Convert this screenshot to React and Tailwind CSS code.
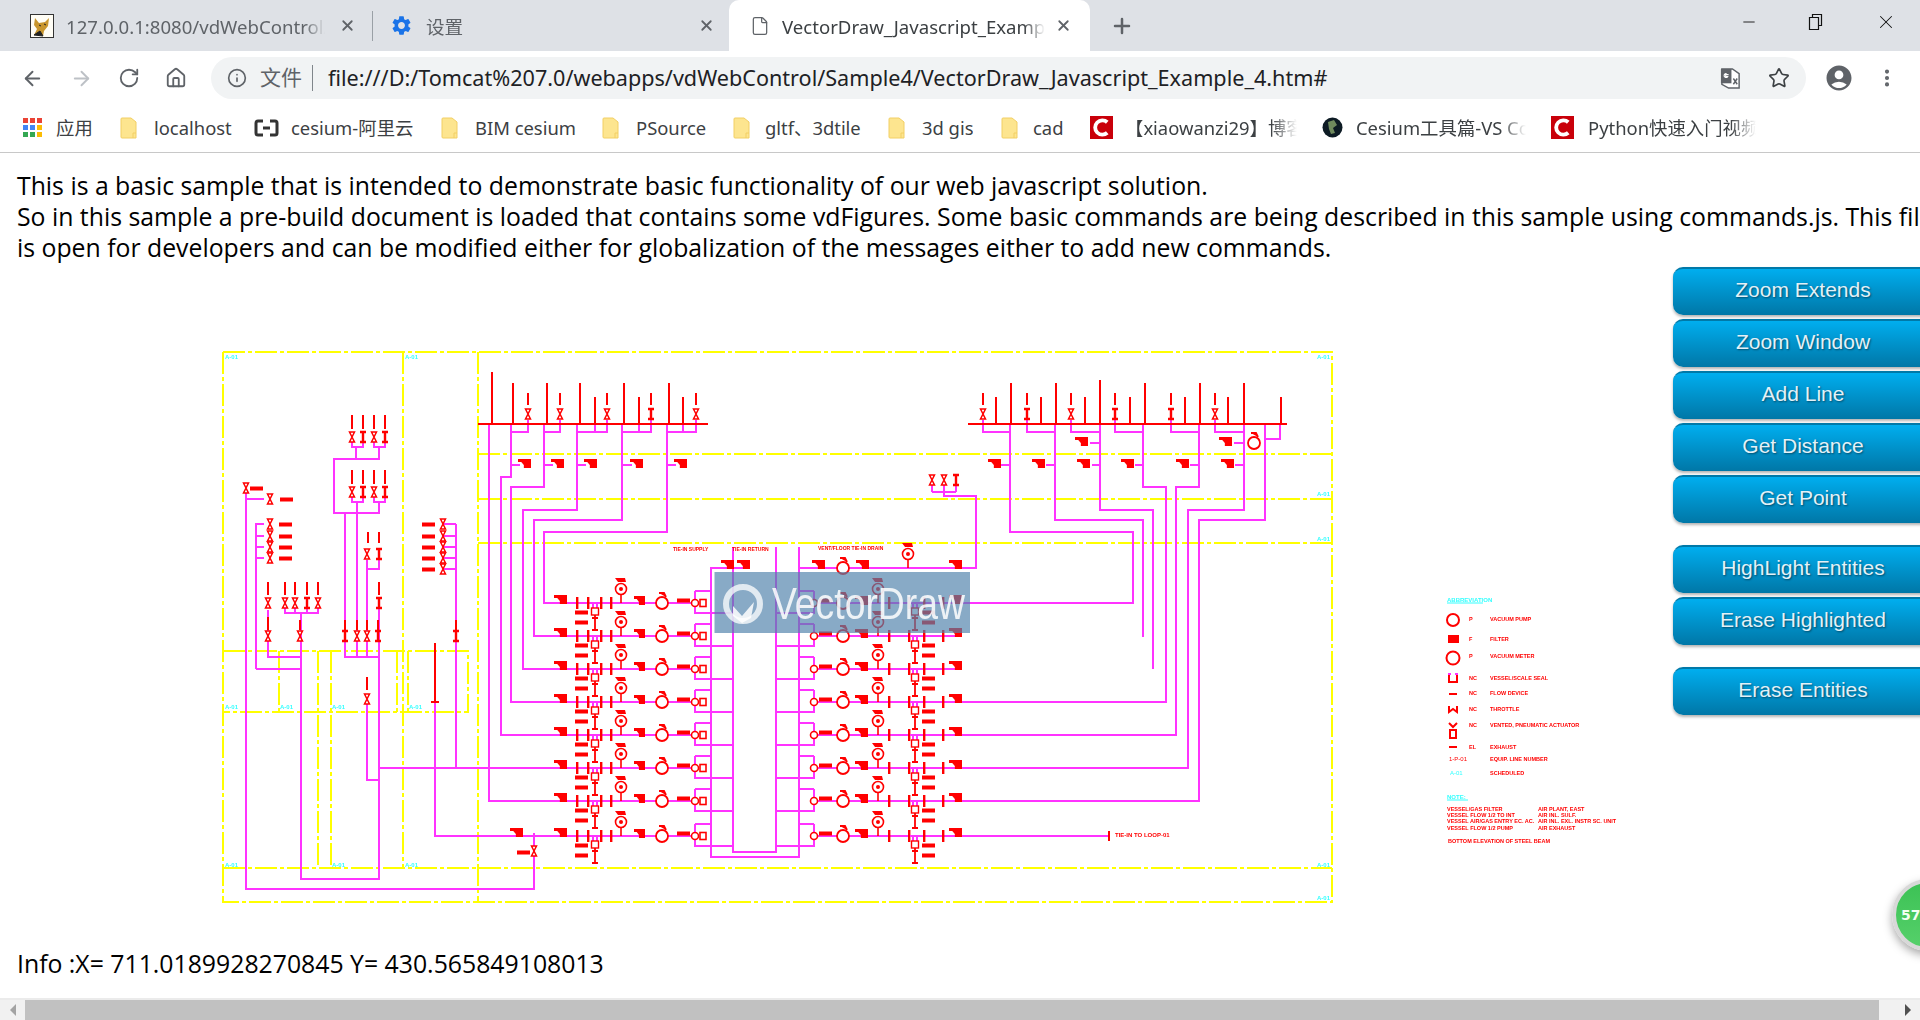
import React from 'react'
import { ArrowLeft, ArrowRight, RotateCw, Home, Info, Star, MoreVertical, Plus, X, Minus, File } from 'lucide-react'
import { MdSettings, MdAccountCircle } from 'react-icons/md'

const RED = '#ff0000'
const MAG = '#ff33ff'
const YEL = '#ffff00'
const CYAN = '#33ffff'

const leftRows = [603, 636, 669, 702, 735, 768, 801, 836]
const rightRows = [568, 603, 636, 669, 702, 735, 768, 801, 836]

// Magenta pipe runs, page coordinates
const pipes = [
  '489,424 489,801 695,801', '511,424 511,477 501,477 501,735 695,735', '544,424 544,487 511,487 511,702 695,702',
  '577,424 577,510 523,510 523,669 695,669', '622,424 622,520 534,520 534,636 695,636', '667,424 667,532 544,532 544,603 695,603',
  '511,432 528,432 528,420', '544,432 560,432 560,420', '577,432 607,432 607,420', '595,432 595,424', '622,432 651,432 651,420',
  '639,432 639,424', '667,432 696,432 696,420', '683,432 683,424', '511,465 520,465', '544,465 553,465', '577,465 586,465', '622,465 632,465', '667,465 676,465',
  '1010,424 1010,532 1133,532 1133,603 814,603', '1055,424 1055,520 1143,520 1143,637', '1100,424 1100,510 1153,510 1153,669',
  '1143,424 1143,487 1166,487 1166,702 956,702', '1199,424 1199,487 1176,487 1176,735 956,735', '1244,424 1244,510 1188,510 1188,768 956,768',
  '1265,424 1265,520 1199,520 1199,801 956,801', '1280,424 1280,439 1265,439', '983,420 983,432 1010,432', '1027,420 1027,432 1055,432',
  '1071,420 1071,432 1100,432', '1115,420 1115,432 1143,432', '1171,420 1171,432 1199,432', '1215,420 1215,432 1244,432',
  '1001,465 1010,465', '1046,465 1055,465', '1092,465 1100,465', '1135,465 1143,465', '1190,465 1199,465', '1235,465 1244,465', '1090,443 1100,443', '1234,443 1244,443',
  '246,493 246,889 534,889 534,833', '246,499 264,499', '256,669 256,524 264,524', '256,536 264,536', '256,547 264,547', '256,558 264,558', '256,669 301,669',
  '301,620 301,879 379,879 379,603', '268,610 268,657 301,657', '285,606 285,613 318,613 318,606', '295,606 295,613', '307,606 307,613', '301,613 301,620',
  '352,442 352,447 363,447 363,442', '374,442 374,447 385,447 385,442', '379,447 379,459 334,459 334,513 345,513 345,657 379,657', '356,447 356,459',
  '352,497 352,502 363,502 363,497', '374,497 374,502 385,502 385,497', '357,502 357,657', '379,502 379,513 345,513', '367,560 367,657', '367,569 379,569 379,558',
  '456,524 456,768', '444,524 456,524', '444,536 456,536', '444,547 456,547', '444,558 456,558', '444,569 456,569',
  '379,768 695,768', '367,700 367,780 379,780', '435,702 435,836 695,836',
  '711,568 711,857 799,857 799,547', '733,547 733,852 776,852 776,547', '710,568 750,568', '800,568 976,568 976,496 944,496 944,492', '932,492 956,492',
  '932,484 932,492', '944,484 944,492', '956,484 956,492', '956,702 956,702', '814,836 1109,836',
]

function Valve({ x, y, bar }) {
  return bar ? (
    <path d={`M${x - 3} ${y - 5}h6M${x - 3} ${y + 5}h6M${x} ${y - 5}v10`} stroke={RED} strokeWidth="2.4" fill="none" />
  ) : (
    <path d={`M${x - 2.5} ${y - 5}h5l-5 10h5z`} stroke={RED} strokeWidth="1.5" fill="#fff" />
  )
}

function Block({ x, y, w = 13 }) {
  return <path d={`M${x} ${y - 4}h${w}v9h-${w * 0.55}v-3l-${w * 0.2} -3h-${w * 0.25}z`} fill={RED} />
}

function Bar({ x, y, w = 13 }) {
  return <rect x={x} y={y - 1.5} width={w} height="4" fill={RED} />
}

function Tick({ x, y }) {
  return <rect x={x - 1} y={y - 6} width="2.4" height="12" fill={RED} />
}

function Pump({ x, y }) {
  return (
    <g stroke={RED} strokeWidth="1.8" fill="#fff">
      <circle cx={x} cy={y} r="6" />
      <path d={`M${x - 3} ${y - 10}h5l2 4`} fill={RED} />
    </g>
  )
}

function Gauge({ x, y }) {
  return (
    <g>
      <path d={`M${x} ${y - 8}v8`} stroke={RED} strokeWidth="1.6" />
      <circle cx={x} cy={y - 14} r="5.5" stroke={RED} strokeWidth="1.6" fill="#fff" />
      <circle cx={x} cy={y - 14} r="2" fill={RED} />
      <path d={`M${x - 6} ${y - 25}h10l1 4h-8z`} fill={RED} />
    </g>
  )
}

function Branch({ x, y }) {
  return (
    <g>
      <path d={`M${x - 5} ${y}h3v5M${x + 5} ${y}h-3v5`} stroke={MAG} strokeWidth="2" fill="none" />
      <rect x={x - 3.5} y={y + 5} width="7" height="7" fill="#fff" stroke={RED} strokeWidth="1.4" />
      <path d={`M${x} ${y + 12}v15M${x - 3} ${y + 15}h6M${x - 3} ${y + 27}h6`} stroke={RED} strokeWidth="1.8" fill="none" />
    </g>
  )
}

function LeftRow({ y }) {
  return (
    <g>
      <Block x={554} y={y - 4} />
      <Tick x={577} y={y} /><Tick x={588} y={y} /><Tick x={601} y={y} /><Tick x={611} y={y} />
      <Branch x={595} y={y} />
      <Bar x={575} y={y + 9} /><Bar x={575} y={y + 19} />
      <Gauge x={621} y={y} />
      <Block x={634} y={y - 3} w={11} />
      <Pump x={662} y={y} />
      <Bar x={677} y={y - 3} />
      <circle cx={695} cy={y} r="3.5" fill="#fff" stroke={RED} strokeWidth="1.6" />
      <rect x={700} y={y - 3.5} width="6" height="7" fill="#fff" stroke={RED} strokeWidth="1.6" />
    </g>
  )
}

function RightRow({ y }) {
  return (
    <g>
      <circle cx={814} cy={y} r="3.5" fill="#fff" stroke={RED} strokeWidth="1.6" />
      <Bar x={819} y={y - 3} />
      <Pump x={843} y={y} />
      <Block x={855} y={y - 3} />
      <Gauge x={878} y={y} />
      <Tick x={889} y={y} /><Tick x={909} y={y} /><Tick x={924} y={y} /><Tick x={943} y={y} />
      <Branch x={915} y={y} />
      <Bar x={922} y={y + 9} /><Bar x={922} y={y + 19} />
      <Block x={949} y={y - 4} />
    </g>
  )
}

const yellowFrame = [
  '223,352 1332,352 1332,902 223,902 223,352', '478,352 478,902', '403,352 403,868', '478,454 1332,454', '478,499 1332,499', '478,543 1332,543', '223,868 1332,868',
  '223,651 468,651 468,712 223,712', '279,651 279,712', '318,651 318,868', '331,651 331,868', '397,651 397,712', '408,651 408,712',
]

const redLines = [
  '478,424 708,424', '968,424 1287,424', '492,372 492,424', '513,383 513,424', '547,383 547,424', '580,383 580,424', '624,383 624,424', '669,383 669,424',
  '595,397 595,424', '639,397 639,424', '683,397 683,424', '528,393 528,405', '560,393 560,405', '607,393 607,405', '651,393 651,405', '696,393 696,405',
  '1011,383 1011,424', '1056,383 1056,424', '1100,380 1100,424', '1145,383 1145,424', '1200,383 1200,424', '1244,383 1244,424',
  '996,397 996,424', '1041,397 1041,424', '1085,397 1085,424', '1130,397 1130,424', '1185,397 1185,424', '1228,397 1228,424', '1281,397 1281,424',
  '983,393 983,405', '1027,393 1027,405', '1071,393 1071,405', '1115,393 1115,405', '1171,393 1171,405', '1215,393 1215,405',
  '352,415 352,429', '363,415 363,429', '374,415 374,429', '385,415 385,429', '352,470 352,484', '363,470 363,484', '374,470 374,484', '385,470 385,484',
  '368,532 368,543', '379,532 379,543', '268,582 268,595', '285,582 285,595', '295,582 295,595', '307,582 307,595', '318,582 318,595', '379,582 379,595',
  '268,617 268,630', '300,620 300,630', '345,620 345,630', '357,620 357,630', '367,620 367,630', '378,620 378,630', '456,620 456,630',
  '435,643 435,702', '367,677 367,690', '431,702 439,702', '1109,831 1109,841',
]

const topValves = [
  [528, 414], [560, 414], [607, 414], [651, 414, true], [696, 414], [983, 414], [1027, 414, true], [1071, 414], [1115, 414, true], [1171, 414, true], [1215, 414],
  [352, 437], [363, 437, true], [374, 437], [385, 437, true], [352, 492], [363, 492, true], [374, 492], [385, 492, true], [367, 554], [379, 554, true],
  [268, 603], [285, 603], [295, 603], [307, 603, true], [318, 603], [379, 603, true], [268, 636], [300, 636], [345, 636, true], [357, 636], [367, 636], [378, 636, true], [456, 636, true],
  [367, 699], [534, 851], [246, 488], [932, 480], [944, 480], [956, 480, true],
]

const labels = [
  [225, 359], [405, 359], [1317, 359], [1317, 496], [1317, 541], [225, 709], [280, 709], [332, 709], [409, 709], [225, 867], [332, 867], [405, 867], [1317, 867], [1317, 900],
]

const legendRows = [
  ['P', 'VACUUM PUMP', 619], ['F', 'FILTER', 639], ['P', 'VACUUM METER', 656], ['NC', 'VESSEL/SCALE SEAL', 678], ['NC', 'FLOW DEVICE', 693],
  ['NC', 'THROTTLE', 709], ['NC', 'VENTED, PNEUMATIC ACTUATOR', 725], ['EL', 'EXHAUST', 747], ['', 'EQUIP. LINE NUMBER', 759], ['', 'SCHEDULED', 773],
]

const legendNotes = [
  ['VESSEL/GAS FILTER', 'AIR PLANT, EAST', 811], ['VESSEL FLOW 1/2 TO INT', 'AIR INL. SULF.', 817], ['VESSEL AIR/GAS ENTRY EC. AC.', 'AIR INL. EXL. INSTR SC. UNIT', 823], ['VESSEL FLOW 1/2 PUMP', 'AIR EXHAUST', 830],
]

function CadDrawing() {
  return (
    <svg viewBox="0 263 1673 677" className="block w-[1673px] h-[677px] blur-[0.6px]">
      <g fill="none" stroke={YEL} strokeWidth="2" strokeDasharray="22 3 4 3">
        {yellowFrame.map((p) => <polyline key={p} points={p} />)}
      </g>
      <g fill="none" stroke={MAG} strokeWidth="2">
        {pipes.map((p) => <polyline key={p} points={p} />)}
        {leftRows.map((y) => <path key={y} d={`M695 ${y - 12}v22h38M695 ${y - 12}h16`} />)}
        {rightRows.slice(1).map((y) => <path key={y} d={`M814 ${y - 12}v22h-38M814 ${y - 12}h-14M814 ${y}h142`} />)}
      </g>
      <g fill="none" stroke={RED} strokeWidth="2">
        {redLines.map((p) => <polyline key={p} points={p} />)}
      </g>
      {topValves.map(([x, y, bar]) => <Valve key={`${x}-${y}`} x={x} y={y} bar={bar} />)}
      {[518, 551, 584, 630, 674, 988, 1032, 1077, 1121, 1176, 1221].map((x) => <Block key={x} x={x} y={463} />)}
      <Block x={1075} y={441} /><Block x={1219} y={441} />
      <Pump x={1254} y={443} />
      {[[250, 488], [280, 499], [279, 524], [279, 536], [279, 547], [279, 558], [422, 524], [422, 536], [422, 547], [422, 558], [422, 569], [517, 852]].map(([x, y]) => <Bar key={`${x}-${y}`} x={x} y={y} />)}
      <Block x={510} y={832} />
      {[499, 524, 536, 547, 558].map((y) => <Valve key={y} x={270} y={y} />)}
      {[524, 536, 547, 558, 569].map((y) => <Valve key={y} x={443} y={y} />)}
      <Block x={721} y={564} /><Block x={737} y={564} />
      {leftRows.map((y) => <LeftRow key={y} y={y} />)}
      <Block x={812} y={564} /><Pump x={843} y={568} /><Block x={856} y={564} /><Gauge x={908} y={568} /><Block x={949} y={564} />
      {rightRows.slice(1).map((y) => <RightRow key={y} y={y} />)}

      <g fontFamily="Liberation Sans, sans-serif" fontWeight="700" fontSize="5" fill={RED}>
        <text x="673" y="551">TIE-IN SUPPLY</text>
        <text x="732" y="551">TIE-IN RETURN</text>
        <text x="818" y="550">VENT/FLOOR TIE-IN DRAIN</text>
        <text x="1115" y="837" fontSize="6">TIE-IN TO LOOP-01</text>
      </g>
      <g fontFamily="Liberation Sans, sans-serif" fontWeight="700" fill={CYAN}>
        {labels.map(([x, y]) => <text key={`${x}-${y}`} x={x} y={y} fontSize="6">A-01</text>)}
      </g>

      <rect x="714.5" y="572" width="255.5" height="61" fill="#4f82ab" fillOpacity="0.68" />
      <circle cx="743" cy="604" r="17" fill="none" stroke="#ffffff" strokeOpacity="0.75" strokeWidth="6" />
      <path d="M733 606l9 10 12-14-3 16-9 5-9-7z" fill="#ffffff" fillOpacity="0.85" />
      <text x="772" y="619" fontFamily="Liberation Sans, sans-serif" fontSize="44" fill="#ffffff" fillOpacity="0.85" textLength="193" lengthAdjust="spacingAndGlyphs">VectorDraw</text>

      <g fontFamily="Liberation Sans, sans-serif" fontWeight="700" fontSize="5.5" fill={RED}>
        <text x="1447" y="602" fill={CYAN} fontSize="6">ABBREVIATION</text>
        <path d="M1447 603h36M1447 800h21" stroke={CYAN} fill="none" />
        {legendRows.map(([code, name, y]) => (
          <g key={y}>
            <text x="1469" y={y + 2}>{code}</text>
            <text x="1490" y={y + 2}>{name}</text>
          </g>
        ))}
        <text x="1447" y="799" fill={CYAN} fontSize="6">NOTE:</text>
        {legendNotes.map(([a, b, y]) => (
          <g key={y}>
            <text x="1447" y={y}>{a}</text>
            <text x="1538" y={y}>{b}</text>
          </g>
        ))}
        <text x="1448" y="843">BOTTOM ELEVATION OF STEEL BEAM</text>
      </g>
      <g stroke={RED} strokeWidth="2" fill="none">
        <circle cx="1453" cy="620" r="6" />
        <rect x="1449" y="636" width="9" height="6" fill={RED} />
        <circle cx="1453" cy="658" r="6.5" />
        <path d="M1449 675v7h8v-7M1449 694h8M1449 706v6l4-3 4 3v-6M1449 723l4 4 4-4M1450 730h6v8h-6zM1449 747h8" />
        <path d="M1448 674h3M1458 674h-3" stroke={MAG} />
        <text x="1450" y="775" fontSize="6" stroke="none" fill={CYAN} fontFamily="Liberation Sans, sans-serif">A-01</text>
        <text x="1449" y="761" fontSize="6" stroke="none" fill={RED} fontFamily="Liberation Sans, sans-serif">1-P-01</text>
      </g>
    </svg>
  )
}

function Tab({ icon, title, width, active, fadeWidth }) {
  return (
    <div className={`flex items-center h-full ${width} ${active ? 'bg-white rounded-t-[10px] text-[#3c4043]' : 'text-[#5f6368]'}`}>
      {icon}
      <span className={`${fadeWidth} overflow-hidden whitespace-nowrap text-[18.6px] pt-[2px] [mask-image:linear-gradient(to_right,black_92%,transparent)]`}>{title}</span>
      <X className="w-[17px] h-[17px] text-[#5f6368] shrink-0" strokeWidth={2.5} />
    </div>
  )
}

function TomcatIcon() {
  return (
    <svg viewBox="0 0 24 24" className="w-6 h-6 shrink-0 mr-3 ml-[30px]">
      <rect x="0.5" y="0.5" width="23" height="23" fill="#fffdf5" stroke="#333" />
      <path d="M5 4l4 5 6-1 4-4-1 8-4 5-1 5-3-4-6 3 3-6-3-4z" fill="#c9962e" />
      <path d="M4 21l6-4 3 5zM9 11l2 1M14 10l2 1" stroke="#222" fill="#222" />
    </svg>
  )
}

function CsdnIcon() {
  return (
    <svg viewBox="0 0 24 24" className="w-[23px] h-[23px] shrink-0">
      <rect width="24" height="24" fill="#c9000a" />
      <path d="M18 6.5a7.5 7.5 0 1 0 0 11" fill="none" stroke="#fff" strokeWidth="4" />
    </svg>
  )
}

function Folder() {
  return (
    <svg viewBox="0 0 17 22" className="w-[17px] h-[22px] shrink-0">
      <path d="M1 2a1 1 0 0 1 1-1h9l5 4v16H2a1 1 0 0 1-1-1z" fill="#fde58f" stroke="#f2cf64" />
      <path d="M13 21v-5h3" fill="none" stroke="#f2cf64" />
    </svg>
  )
}

const bookmarks = [
  { w: 'w-[97px]', gap: 'gap-[13px]', text: '应用', icon: (
    <svg viewBox="0 0 20 20" className="w-5 h-5 shrink-0">
      {[['#ea4335', '#ea4335', '#ea4335'], ['#4285f4', '#4285f4', '#fbbc05'], ['#34a853', '#34a853', '#fbbc05']].map((row, r) =>
        row.map((c, i) => <rect key={`${r}${i}`} x={i * 7} y={r * 7} width="5" height="5" fill={c} />),
      )}
    </svg>
  ) },
  { w: 'w-[134px]', gap: 'gap-[17px]', text: 'localhost', icon: <Folder /> },
  { w: 'w-[187px]', gap: 'gap-[12px]', text: 'cesium-阿里云', icon: (
    <svg viewBox="0 0 25 20" className="w-[25px] h-5 shrink-0">
      <path d="M9 3H4a2 2 0 0 0-2 2v10a2 2 0 0 0 2 2h5M16 3h5a2 2 0 0 1 2 2v10a2 2 0 0 1-2 2h-5M9 10h7" fill="none" stroke="#333" strokeWidth="3" />
    </svg>
  ) },
  { w: 'w-[161px]', gap: 'gap-[17px]', text: 'BIM cesium', icon: <Folder /> },
  { w: 'w-[131px]', gap: 'gap-[17px]', text: 'PSource', icon: <Folder /> },
  { w: 'w-[155px]', gap: 'gap-[15px]', text: 'gltf、3dtile', icon: <Folder /> },
  { w: 'w-[113px]', gap: 'gap-[17px]', text: '3d gis', icon: <Folder /> },
  { w: 'w-[89px]', gap: 'gap-[15px]', text: 'cad', icon: <Folder /> },
  { w: 'w-[232px]', gap: 'gap-[12px]', text: '【xiaowanzi29】博客', clip: 'w-[172px]', icon: <CsdnIcon /> },
  { w: 'w-[229px]', gap: 'gap-[13px]', text: 'Cesium工具篇-VS Code', clip: 'w-[170px]', icon: (
    <svg viewBox="0 0 21 21" className="w-[21px] h-[21px] shrink-0">
      <circle cx="10.5" cy="10.5" r="10" fill="#0d1b24" />
      <path d="M6 5l6-2 3 5-4 3 2 5-4 1-2-5z" fill="#6f8a5d" />
    </svg>
  ) },
  { w: 'w-[220px]', gap: 'gap-[14px]', text: 'Python快速入门视频', clip: 'w-[168px]', icon: <CsdnIcon /> },
]

const buttonGroups = [
  { cls: '', items: ['Zoom Extends', 'Zoom Window', 'Add Line', 'Get Distance', 'Get Point'] },
  { cls: 'mt-[22px]', items: ['HighLight Entities', 'Erase Highlighted'] },
  { cls: 'mt-[22px]', items: ['Erase Entities'] },
]

export default function App() {
  return (
    <div className="relative flex flex-col w-[1920px] h-[1020px] overflow-hidden bg-white text-black font-['Noto_Sans','Noto_Sans_CJK_SC',sans-serif]">
      {/* tab strip */}
      <div className="flex items-center h-[51px] shrink-0 bg-[#dee1e6]">
        <Tab icon={<TomcatIcon />} title="127.0.0.1:8080/vdWebControl/" width="w-[372px]" fadeWidth="w-[259px] mr-[14px]" />
        <div className="w-px h-[30px] bg-[#9aa0a6] shrink-0" />
        <Tab
          icon={<MdSettings className="w-[23px] h-[23px] text-[#1a73e8] ml-[17px] mr-[13px] shrink-0" />}
          title="设置"
          width="w-[356px]"
          fadeWidth="w-[272px]"
        />
        <Tab
          active
          icon={<File className="w-[20px] h-[20px] text-[#5f6368] ml-[21px] mr-[12px] shrink-0" strokeWidth={1.5} />}
          title="VectorDraw_Javascript_Example_4.htm"
          width="w-[361px]"
          fadeWidth="w-[263px] mr-[10px]"
        />
        <Plus className="w-[24px] h-[24px] text-[#5f6368] ml-[20px]" strokeWidth={2.5} />
        <div className="flex items-center ml-auto pb-[8px] text-[#111]">
          <Minus className="w-[18px] h-[18px] mr-[50px]" strokeWidth={1.2} />
          <svg viewBox="0 0 16 18" className="w-[16px] h-[18px] mr-[51px]">
            <path d="M1.5 4.5h9v12h-9zM4.5 4.5v-3h9v11h-3" fill="none" stroke="#111" strokeWidth="1.2" />
          </svg>
          <X className="w-[22px] h-[22px] mr-[23px]" strokeWidth={1.1} />
        </div>
      </div>

      {/* toolbar */}
      <div className="flex items-center h-[51px] shrink-0 pt-[3px] text-[#5f6368]">
        <ArrowLeft className="w-[23px] h-[23px] ml-[21px]" strokeWidth={2} />
        <ArrowRight className="w-[23px] h-[23px] ml-[26px] text-[#bdc1c6]" strokeWidth={2} />
        <RotateCw className="w-[22px] h-[22px] ml-[25px]" strokeWidth={2} />
        <Home className="w-[22px] h-[22px] ml-[25px]" strokeWidth={2} />
        <div className="flex items-center w-[1595px] h-[42px] ml-[24px] rounded-full bg-[#f1f3f4]">
          <Info className="w-[20px] h-[20px] ml-[16px]" strokeWidth={2} />
          <span className="ml-[13px] text-[21px] text-[#5f6368]">文件</span>
          <div className="w-px h-[26px] ml-[10px] bg-[#80868b]" />
          <span className="ml-[15px] w-[1010px] whitespace-nowrap text-[21.6px] text-[#202124]">file:///D:/Tomcat%207.0/webapps/vdWebControl/Sample4/VectorDraw_Javascript_Example_4.htm#</span>
          <svg viewBox="0 0 24 24" className="w-[23px] h-[23px] ml-auto">
            <path d="M3 2h11l7 5v15H10L3 18z" fill="#fff" stroke="#5f6368" strokeWidth="1.5" />
            <path d="M2 2h11v15H2z" fill="#5f6368" />
            <path d="M10 8H7v2h2a2 2 0 1 1-1-3" fill="none" stroke="#fff" strokeWidth="1.2" />
            <path d="M15 12l4 6M19 12l-4 6" stroke="#5f6368" strokeWidth="1.5" />
          </svg>
          <Star className="w-[22px] h-[22px] ml-[26px] mr-[16px] text-[#3c4043]" strokeWidth={1.8} />
        </div>
        <MdAccountCircle className="w-[30px] h-[30px] ml-[18px]" />
        <MoreVertical className="w-[22px] h-[22px] ml-[22px]" strokeWidth={2.5} />
      </div>

      {/* bookmarks */}
      <div className="flex items-center h-[51px] shrink-0 pl-[23px] pt-[2px] border-b border-[#c8c8c8] text-[18.4px] text-[#3c4043]">
        {bookmarks.map((b) => (
          <div key={b.text} className={`flex items-center shrink-0 ${b.w} ${b.gap}`}>
            {b.icon}
            <span className={`whitespace-nowrap overflow-hidden ${b.clip ?? ''} ${b.clip ? '[mask-image:linear-gradient(to_right,black_85%,transparent)]' : ''}`}>{b.text}</span>
          </div>
        ))}
      </div>

      {/* page */}
      <div className="flex-1 min-h-0 overflow-hidden font-['Open_Sans','Noto_Sans',sans-serif] text-[24.8px]">
        <div className="pl-[17px] pt-[17px] leading-[31px] whitespace-nowrap">
          <div>This is a basic sample that is intended to demonstrate basic functionality of our web javascript solution.</div>
          <div>So in this sample a pre-build document is loaded that contains some vdFigures. Some basic commands are being described in this sample using commands.js. This file</div>
          <div>is open for developers and can be modified either for globalization of the messages either to add new commands.</div>
        </div>
        <div className="flex w-[1940px]">
          <div className="w-[1673px] shrink-0">
            <CadDrawing />
            <div className="pl-[17px] pt-[8px] leading-[31px] whitespace-nowrap">Info :X= 711.0189928270845 Y= 430.565849108013</div>
          </div>
          <div className="w-[260px] pt-[4px] shrink-0 font-['Liberation_Sans',sans-serif] text-[21px]">
            {buttonGroups.map((g) => (
              <div key={g.items[0]} className={`flex flex-col gap-[4px] ${g.cls}`}>
                {g.items.map((label) => (
                  <button
                    key={label}
                    className="h-[48px] pb-[4px] rounded-[10px] border-t-2 border-[#0079a8] bg-gradient-to-b from-[#00aeef] to-[#0077a7] text-[#e3f1f8] [text-shadow:1px_1px_2px_rgba(0,0,0,0.45)] shadow-[0_2px_3px_rgba(0,0,0,0.3)]"
                  >
                    {label}
                  </button>
                ))}
              </div>
            ))}
          </div>
        </div>
      </div>

      {/* horizontal scrollbar */}
      <div className="flex items-center h-[22px] shrink-0 bg-[#f1f1f1] border-t-2 border-[#ebebeb]">
        <div className="w-[25px] flex justify-center">
          <div className="w-0 h-0 border-y-[6px] border-y-transparent border-r-[6px] border-r-[#a3a3a3]" />
        </div>
        <div className="w-[1854px] h-full bg-[#c1c1c1]" />
        <div className="flex-1 flex justify-end pr-[9px]">
          <div className="w-0 h-0 border-y-[6px] border-y-transparent border-l-[6px] border-l-[#505050]" />
        </div>
      </div>

      {/* floating speed ball */}
      <div className="absolute left-[1892px] top-[879px] flex items-center w-[72px] h-[72px] pl-[5px] rounded-full border-[4px] border-[#d8d8d8] bg-gradient-to-b from-[#3cc255] to-[#55d06a] shadow-[0_4px_10px_rgba(0,0,0,0.35)] font-['DejaVu_Sans',sans-serif] text-[14px] font-bold text-[#f2fff2]">
        57
      </div>
    </div>
  )
}
